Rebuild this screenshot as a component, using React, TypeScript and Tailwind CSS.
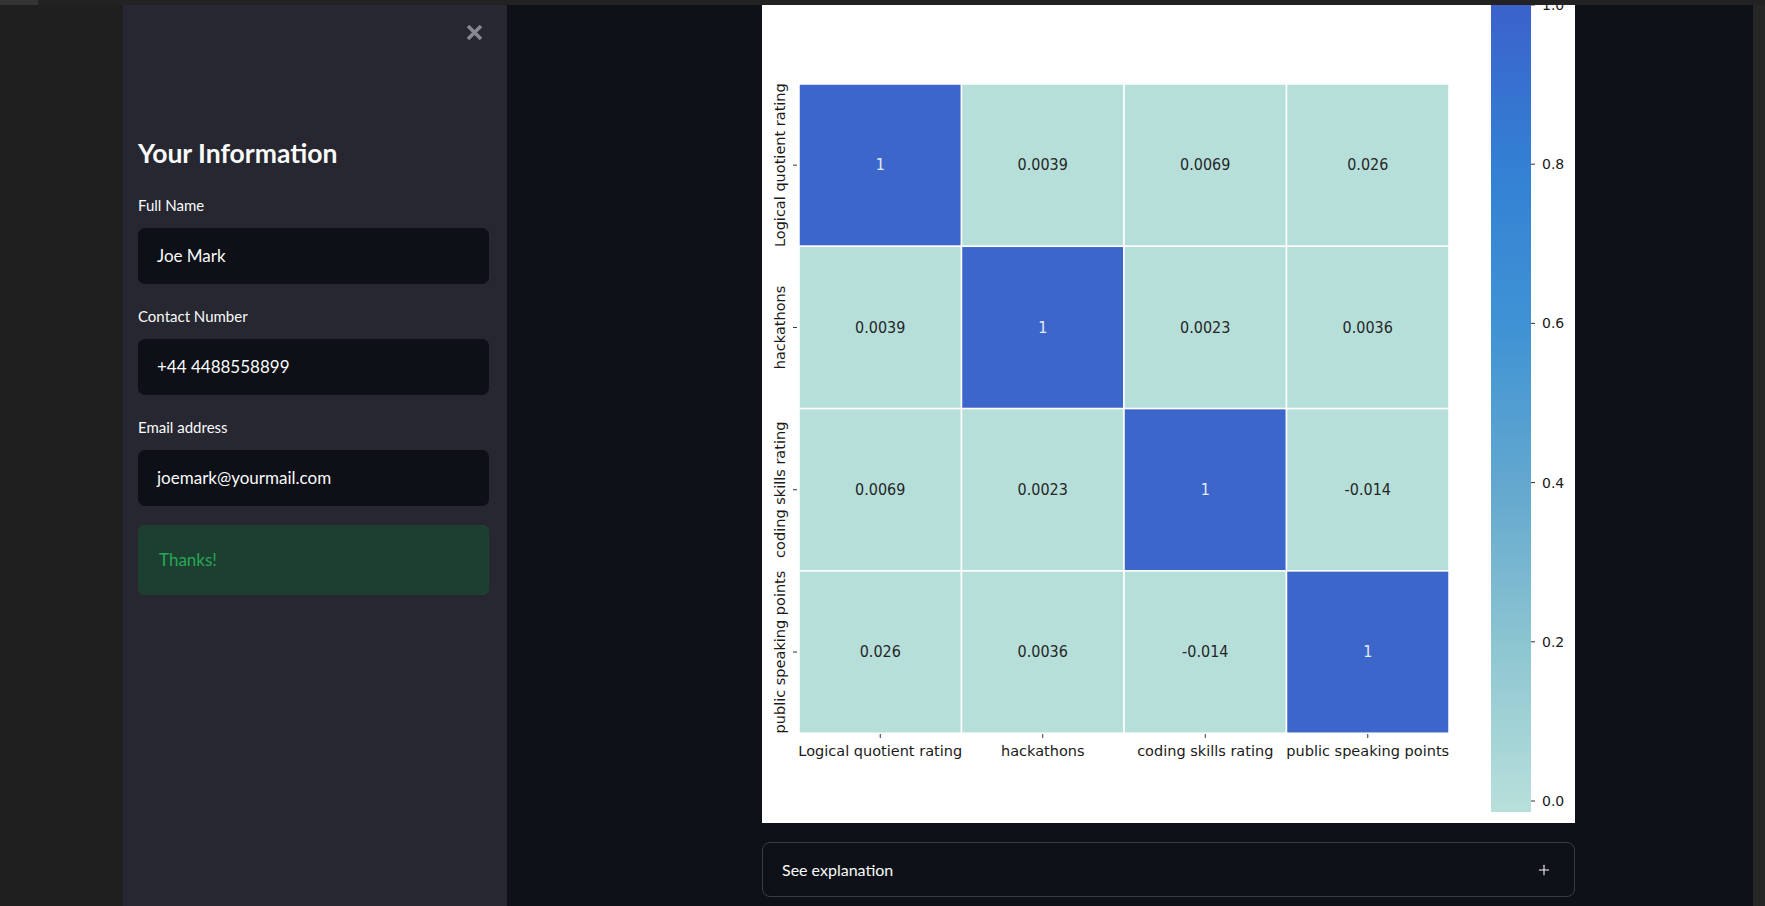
import { Plus } from "lucide-react";

const LABELS = ["Logical quotient rating", "hackathons", "coding skills rating", "public speaking points"];

const CORR = [
  [1, 0.0039, 0.0069, 0.026],
  [0.0039, 1, 0.0023, 0.0036],
  [0.0069, 0.0023, 1, -0.014],
  [0.026, 0.0036, -0.014, 1],
];

const FIELDS = [
  { label: "Full Name", value: "Joe Mark" },
  { label: "Contact Number", value: "+44 4488558899" },
  { label: "Email address", value: "joemark@yourmail.com" },
];

// heatmap geometry, in px of the plot image
const GX = 37;
const GY = 79;
const CW = 162.5;
const CH = 162.3;
const FONT = "DejaVu Sans, Verdana, sans-serif";

function CorrHeatmap() {
  const barY = (v: number) => 796 - v * 796;

  return (
    <svg width="813" height="818" viewBox="0 0 813 818" className="block bg-white">
      <defs>
        <linearGradient id="cbar" x1="0" y1="0" x2="0" y2="1">
          <stop offset="0" stopColor="#3b62cb" />
          <stop offset="0.2" stopColor="#3380d4" />
          <stop offset="0.4" stopColor="#3f93d4" />
          <stop offset="0.6" stopColor="#64a8cf" />
          <stop offset="0.8" stopColor="#8ec6d1" />
          <stop offset="1" stopColor="#b8e0db" />
        </linearGradient>
      </defs>

      {/* cells */}
      {CORR.map((row, r) =>
        row.map((v, c) => {
          const x = GX + c * CW;
          const y = GY + r * CH;
          const diag = v === 1;
          return (
            <g key={`${r}-${c}`}>
              <rect x={x} y={y} width={CW} height={CH} fill={diag ? "#3c66ca" : "#b6dfda"} stroke="#ffffff" strokeWidth="1.5" />
              <text
                transform={`translate(${x + CW / 2} ${y + CH / 2}) scale(1 1.12)`}
                textAnchor="middle"
                dominantBaseline="central"
                fontFamily={FONT}
                fontSize="14.4"
                fill={diag ? "#e4ecf8" : "#262626"}
              >
                {String(v)}
              </text>
            </g>
          );
        })
      )}

      {/* y axis */}
      {LABELS.map((l, i) => {
        const cy = GY + i * CH + CH / 2;
        return (
          <g key={l}>
            <line x1="31" x2="35" y1={cy} y2={cy} stroke="#333" strokeWidth="1" />
            <text
              transform={`translate(23 ${cy}) rotate(-90)`}
              textAnchor="middle"
              fontFamily={FONT}
              fontSize="14.5"
              fill="#1a1a1a"
            >
              {l}
            </text>
          </g>
        );
      })}

      {/* x axis */}
      {LABELS.map((l, i) => {
        const cx = GX + i * CW + CW / 2;
        return (
          <g key={`x-${l}`}>
            <line x1={cx} x2={cx} y1="729" y2="733" stroke="#333" strokeWidth="1" />
            <text x={cx} y="751" textAnchor="middle" fontFamily={FONT} fontSize="14.5" fill="#1a1a1a">
              {l}
            </text>
          </g>
        );
      })}

      {/* colour bar */}
      <rect x="729" y="0" width="40" height="807" fill="url(#cbar)" />
      {[0, 0.2, 0.4, 0.6, 0.8, 1].map((v) => (
        <g key={v}>
          <line x1="769" x2="773" y1={barY(v)} y2={barY(v)} stroke="#333" strokeWidth="1" />
          <text x="780" y={barY(v)} dominantBaseline="central" fontFamily={FONT} fontSize="14" fill="#1a1a1a">
            {v.toFixed(1)}
          </text>
        </g>
      ))}
    </svg>
  );
}

export default function App() {
  return (
    <div className="w-[1765px] h-[906px] flex flex-col overflow-hidden bg-[#1f1f1f] font-['Lato',sans-serif]">
      {/* recorder frame top edge */}
      <div className="h-[5px] flex shrink-0">
        <div className="w-[38px] bg-[#343434]" />
        <div className="flex-1 bg-[#222222]" />
      </div>

      <div className="flex flex-1 min-h-0">
        <div className="w-[123px] bg-[#1f1f1f]" />

        {/* sidebar */}
        <aside className="relative w-[384px] bg-[#262730] pl-[15px] pr-[18px] pt-[133px]">
          <button className="absolute left-[343px] top-[19px] w-[17px] h-[17px]">
            <svg width="17" height="17" viewBox="0 0 17 17">
              <path d="M2 2 L15 15 M15 2 L2 15" stroke="#86888f" strokeWidth="3.6" strokeLinecap="butt" />
            </svg>
          </button>

          <h2 className="text-[26.5px] leading-[31px] font-bold text-[#fafafa]">Your Information</h2>

          <div className="mt-[26px] flex flex-col gap-[22px]">
            {FIELDS.map((f) => (
              <div key={f.label}>
                <div className="text-[15px] leading-[21px] text-[#fafafa] mb-[12px]">{f.label}</div>
                <div className="h-[56px] rounded-[7px] bg-[#0d1016] px-[19px] flex items-center text-[17px] text-[#fafafa]">
                  {f.value}
                </div>
              </div>
            ))}
          </div>

          <div className="mt-[19px] h-[70px] rounded-[6px] bg-[#1d3f31] border border-[#21402f] px-[20px] flex items-center text-[17px] text-[#27a854]">
            Thanks!
          </div>
        </aside>

        {/* main */}
        <main className="flex-1 bg-[#0e1117]">
          <div className="ml-[255px] w-[813px]">
            <CorrHeatmap />

            <div className="mt-[19px] h-[55px] rounded-[8px] border border-[#3a3c44] px-[19px] flex items-center justify-between text-[16px] text-[#fafafa]">
              <span>See explanation</span>
              <Plus size={16} strokeWidth={1.6} className="mr-[3px] text-[#fafafa]" />
            </div>
          </div>
        </main>

        <div className="w-[12px] bg-[#262626]" />
      </div>
    </div>
  );
}
